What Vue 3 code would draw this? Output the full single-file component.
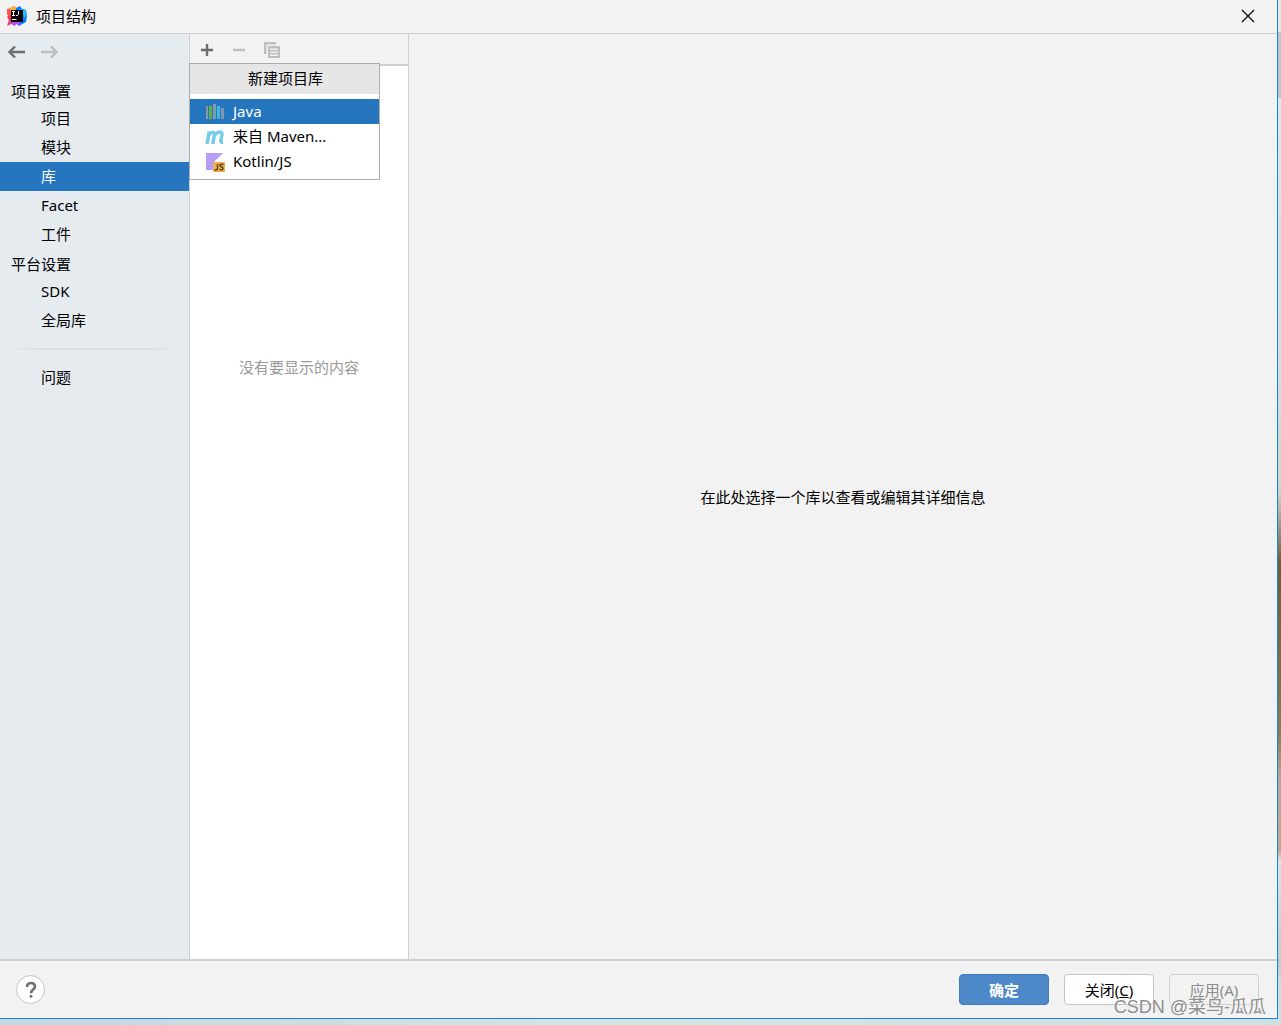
<script setup>
import { ref } from 'vue'

const groups = [
  { title: '项目设置', items: ['项目', '模块', '库', 'Facet', '工件'] },
  { title: '平台设置', items: ['SDK', '全局库'] },
]
const selected = ref('库')
</script>

<template>
  <div class="desktop">
    <div class="window">
      <header class="titlebar">
        <svg class="logo" width="20" height="20" viewBox="0 0 20 20" aria-hidden="true">
          <path d="M0 3 L4 2 L6 0 L10 2 V10 L2 11 L0 8 Z" fill="#fb5a3c" />
          <path d="M3 2 L7 0 L10 4 H3 Z" fill="#fdb62f" />
          <path d="M9 2 L13 0 L15 3 L19 4 L20 10 L19 16 L12 20 L9 17 Z" fill="#087cfa" />
          <path d="M14 2 L19 4 L20 9 L17 12 L15 5 Z" fill="#28b8f5" />
          <path d="M0 11 L5 7 L6 17 L0 20 L2 14 Z" fill="#fe315d" />
          <path d="M2 16 L12 15 L14 19 L10 18 L7 20 Z" fill="#b74af7" />
          <rect x="4" y="4" width="12" height="12" fill="#0b0507" />
          <path d="M5 5.500H8M6.500 5.500V9.500M5 9.500H8M11.500 5V8.500L10.500 9.500H9M5 13.500H9.500" fill="none" stroke="#fff" stroke-width="1" />
        </svg>
        <h1>项目结构</h1>
        <button class="icon-btn close" aria-label="关闭窗口">
          <svg width="14" height="14" viewBox="0 0 14 14"><path d="M1 1L13 13M13 1L1 13" stroke="#111" stroke-width="1.400" /></svg>
        </button>
      </header>

      <div class="content">
        <aside class="sidebar">
          <div class="history">
            <button class="icon-btn" aria-label="后退">
              <svg width="18" height="14" viewBox="0 0 18 14"><path d="M17 7H2M7 1.500L1.500 7L7 12.500" fill="none" stroke="#6e6e6e" stroke-width="2.400" /></svg>
            </button>
            <button class="icon-btn" aria-label="前进" disabled>
              <svg width="18" height="14" viewBox="0 0 18 14"><path d="M0 7H15M10 1.500L15.500 7L10 12.500" fill="none" stroke="#bcbebf" stroke-width="2.400" /></svg>
            </button>
          </div>
          <nav>
            <section v-for="group in groups" :key="group.title">
              <h2>{{ group.title }}</h2>
              <button
                v-for="item in group.items"
                :key="item"
                class="nav-item"
                :class="{ active: item === selected }"
                @click="selected = item"
              >{{ item }}</button>
            </section>
            <hr>
            <button class="nav-item">问题</button>
          </nav>
        </aside>

        <section class="library">
          <div class="toolbar">
            <button class="icon-btn" aria-label="添加">
              <svg width="14" height="14" viewBox="0 0 14 14"><path d="M7 1V13M1 7H13" stroke="#6e6e6e" stroke-width="2.400" /></svg>
            </button>
            <button class="icon-btn" aria-label="移除" disabled>
              <svg width="14" height="14" viewBox="0 0 14 14"><path d="M1 7H13" stroke="#bebebe" stroke-width="2.400" /></svg>
            </button>
            <button class="icon-btn" aria-label="复制" disabled>
              <svg width="16" height="16" viewBox="0 0 16 16">
                <path d="M1.200 12V1.200H12" fill="none" stroke="#bebebe" stroke-width="2.400" />
                <path d="M4 4H16V16H4ZM6 6.500V8H14V6.500ZM6 9.500V11H14V9.500ZM6 12.500V14H14V12.500Z" fill="#bebebe" fill-rule="evenodd" />
              </svg>
            </button>
          </div>
          <p class="empty">没有要显示的内容</p>

          <div class="popup">
            <h3>新建项目库</h3>
            <div class="options">
              <button class="option active">
                <svg width="20" height="20" viewBox="0 0 20 20" aria-hidden="true">
                  <path d="M1 4H3V17H1ZM8 2H11V17H8ZM16 6H19V17H16Z" fill="#8498ab" />
                  <path d="M4 4H7V17H4Z" fill="#5faf46" />
                  <path d="M12 4H15V17H12Z" fill="#40b6e0" />
                </svg>
                Java
              </button>
              <button class="option">
                <svg width="20" height="20" viewBox="0 0 20 20" aria-hidden="true">
                  <path d="M2 17L4.300 4.500M3.800 8.500C5.500 5 9.800 4.200 9.400 7.800L7.800 17M9.200 8.500C11.500 4.500 17.500 3.800 17 7.800L15.800 13.500C15.500 15.500 16.500 15.500 18 15.200" fill="none" stroke="#76cbe9" stroke-width="3.500" />
                </svg>
                来自 Maven...
              </button>
              <button class="option">
                <svg width="20" height="20" viewBox="0 0 20 20" aria-hidden="true">
                  <path d="M1 1H18L9 10H8V18H1Z" fill="#b99bf8" />
                  <rect x="8" y="10" width="12" height="10" fill="#f2b04b" />
                  <path d="M12.500 12V16.500Q12.500 18 10.500 18H9.500M18.500 12.500Q15 11.500 15 13.500C15 15 18 14.500 18 16.500Q18 18.500 14.500 17.500" fill="none" stroke="#5d4524" stroke-width="1.500" />
                </svg>
                Kotlin/JS
              </button>
            </div>
          </div>
        </section>

        <main class="details">在此处选择一个库以查看或编辑其详细信息</main>
      </div>

      <footer class="footer">
        <button class="help" aria-label="帮助">
          <svg width="12" height="18" viewBox="0 0 12 18"><path d="M2 6C2 0.800 10 0.800 10 5.500C10 8.500 6 8.500 6 12.300" fill="none" stroke="#6e6e6e" stroke-width="2.600" /><rect x="4.700" y="14" width="2.600" height="2.600" fill="#6e6e6e" /></svg>
        </button>
        <button class="btn primary">确定</button>
        <button class="btn">关闭(<u>C</u>)</button>
        <button class="btn" disabled>应用(A)</button>
      </footer>
    </div>
    <span class="watermark">CSDN @菜鸟-瓜瓜</span>
  </div>
</template>

<style>
body {
  margin: 0;
}
</style>

<style scoped>
.desktop {
  position: relative;
  display: flex;
  box-sizing: border-box;
  min-height: 100vh;
  padding: 0 3px 6px 0;
  background:
    linear-gradient(#e3e6e8 0 32px, #c4c5ca 32px 98px, #dfe6ec 98px, #d3dde2 38%, #cfd2cf 48%, #6e5b3c 55%, #807453 68%, #8c8062 72%, #bda897 76%, #c5a692 83%, #dde4e8 84%, #c3c8cb 94%, #cfe0e4 96%) right / 3px 100% no-repeat,
    linear-gradient(90deg, #c5d8de, #d5e3e3 50%, #cde0df);
  color: #000;
  font: 15px/22px "Noto Sans", "Noto Sans CJK SC", sans-serif;
}
.window {
  flex: 1;
  min-width: 0;
  display: flex;
  flex-direction: column;
  background: #f2f2f2;
  border: solid #1883d7;
  border-width: 0 1px 1px 0;
}
h1, h2, h3, p {
  margin: 0;
  font: inherit;
}
button {
  padding: 0;
  border: 0;
  background: none;
  color: inherit;
  font: inherit;
}
svg {
  display: block;
}
.icon-btn {
  display: flex;
}
.titlebar {
  display: flex;
  align-items: center;
  box-sizing: border-box;
  height: 34px;
  padding: 0 22px 2px 7px;
  border-bottom: 1px solid #d0d0d0;
}
.titlebar h1 {
  margin-left: 9px;
}
.close {
  margin-left: auto;
}
.content {
  flex: 1;
  display: flex;
}
.sidebar {
  width: 189px;
  background: #e6ebf0;
  border-right: 1px solid #d0d0d0;
}
.history {
  display: flex;
  align-items: center;
  gap: 15px;
  height: 36px;
  padding: 0 8px;
  margin-bottom: 6px;
}
h2 {
  height: 28px;
  padding: 0 11px;
  line-height: 30px;
}
.nav-item {
  display: block;
  width: 100%;
  height: 29px;
  padding: 0 0 2px 41px;
  text-align: left;
}
.nav-item.active,
.option.active {
  background: #2675bf;
  color: #fff;
}
hr {
  height: 2px;
  margin: 13px 8px;
  border: 0;
  background: linear-gradient(90deg, transparent, #dcdfe2 20%, #dcdfe2 80%, transparent);
}
.library {
  position: relative;
  display: flex;
  flex-direction: column;
  width: 218px;
  background: #fff;
  border-right: 1px solid #d0d0d0;
}
.toolbar {
  display: flex;
  align-items: center;
  gap: 18px;
  box-sizing: border-box;
  height: 32px;
  padding: 2px 10px 0;
  background: #f2f2f2;
  border-bottom: 2px solid #d0d0d0;
}
.empty {
  flex: 1;
  display: grid;
  grid-template-rows: 1fr auto 2fr;
  color: #999;
  text-align: center;
}
.empty::before,
.empty::after {
  content: "";
}
.popup {
  position: absolute;
  top: 29px;
  left: -1px;
  width: 189px;
  background: #fff;
  border: 1px solid #adadad;
}
h3 {
  height: 30px;
  padding-left: 2px;
  background: #e6e6e6;
  line-height: 28px;
  text-align: center;
}
.options {
  padding: 5px 0;
}
.option {
  display: flex;
  align-items: center;
  gap: 8px;
  width: 100%;
  height: 25px;
  padding: 0 0 2px 15px;
}
.option svg {
  margin-top: 2px;
}
.details {
  flex: 1;
  display: flex;
  align-items: center;
  justify-content: center;
}
.footer {
  display: flex;
  align-items: center;
  gap: 15px;
  height: 57px;
  padding: 0 18px 0 16px;
  border-top: 2px solid #d0d0d0;
}
.help {
  display: flex;
  align-items: center;
  justify-content: center;
  box-sizing: border-box;
  width: 29px;
  height: 29px;
  margin-right: auto;
  background: #fff;
  border: 1px solid #c4c4c4;
  border-radius: 50%;
}
.btn {
  box-sizing: border-box;
  width: 90px;
  height: 31px;
  background: #fff;
  border: 1px solid #c4c4c4;
  border-radius: 4px;
}
.btn.primary {
  background: #4d89c9;
  border-color: #3f7cbd;
  color: #fff;
  font-weight: 700;
}
.btn:disabled {
  background: #f2f2f2;
  border-color: #d0d0d0;
  color: #8c8c8c;
}
.watermark {
  position: absolute;
  right: 15px;
  bottom: 6px;
  color: #8f8f8f;
  font: 18px/24px "Liberation Sans", "Noto Sans CJK SC", sans-serif;
  text-shadow: -1px -1px 0 #fff8;
}
</style>
